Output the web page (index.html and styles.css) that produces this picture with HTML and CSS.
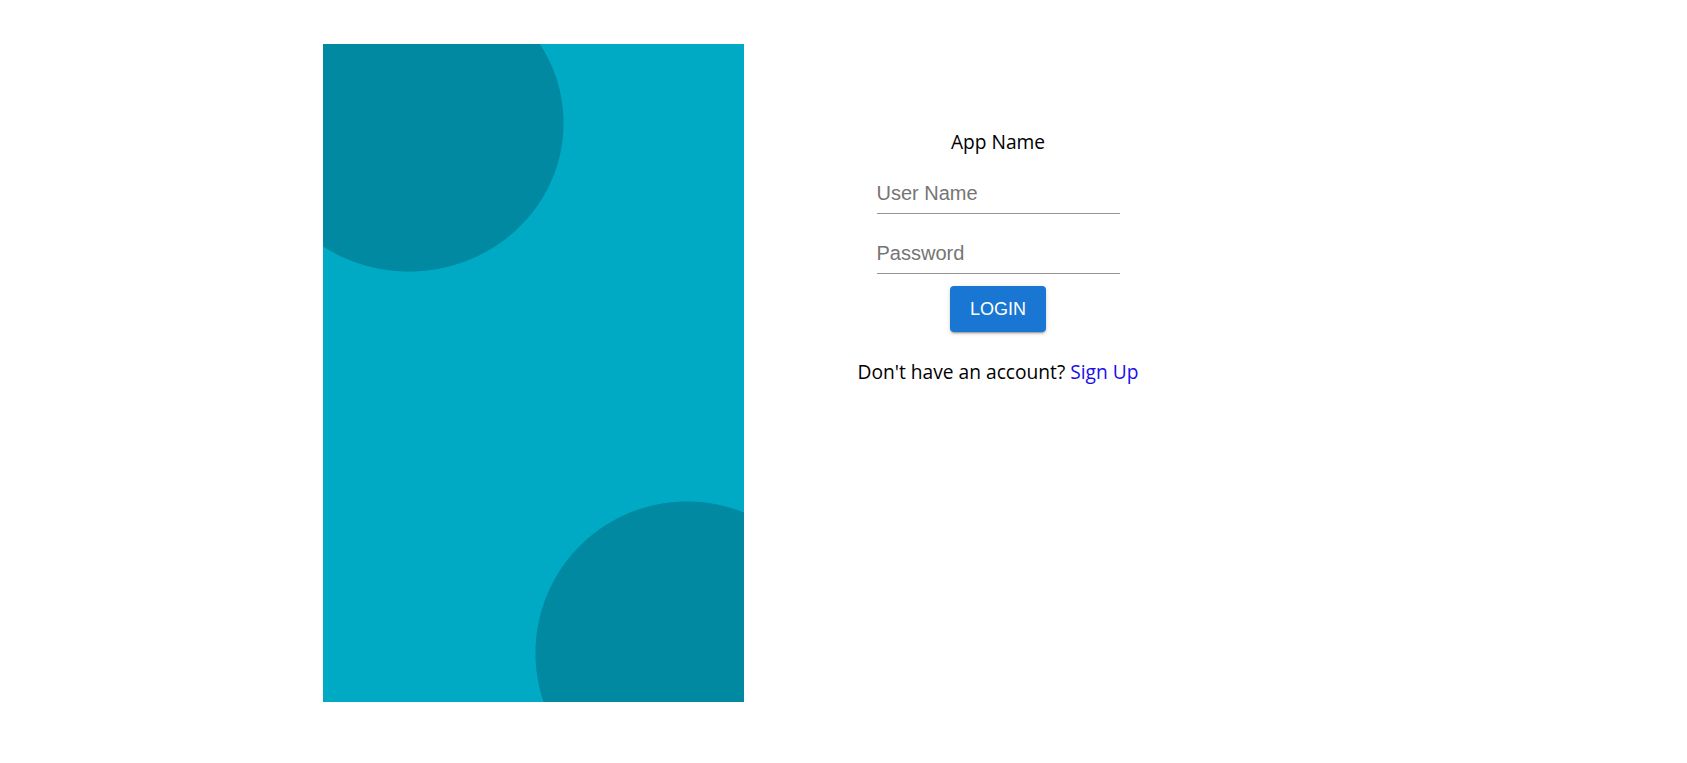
FILE: index.html
```html
<!DOCTYPE html>
<html lang="en">
<head>
<meta charset="utf-8">
<title>Login</title>
<link rel="stylesheet" href="styles.css">
</head>
<body>
<div class="page">
  <div class="hero"></div>
  <div class="form-col">
    <div class="app-name">App Name</div>
    <form class="form">
      <input class="field" type="text" placeholder="User Name">
      <input class="field" type="password" placeholder="Password">
      <button class="login-btn" type="button">LOGIN</button>
    </form>
    <p class="signup">Don't have an account? <a class="signup-link" href="#">Sign Up</a></p>
  </div>
</div>
</body>
</html>
```

FILE: styles.css
```css
html, body {
  margin: 0;
  padding: 0;
  background: #fff;
}

.page {
  display: flex;
  align-items: flex-start;
  padding-top: 44px;
  padding-left: 323px;
}

.hero {
  width: 421px;
  height: 658px;
  flex: none;
  background-color: #00aac4;
  background-image:
    radial-gradient(ellipse 155px 149px at 86px 79px, #0089a0 99.4%, rgba(0,137,160,0) 100%),
    radial-gradient(circle 152px at 364px 609px, #0089a0 99.4%, rgba(0,137,160,0) 100%);
}

.form-col {
  width: 508px;
  display: flex;
  flex-direction: column;
  align-items: center;
  padding-top: 86px;
}

.app-name {
  font-family: "Open Sans", sans-serif;
  font-size: 19.2px;
  line-height: 24px;
  color: #000;
}

.form {
  display: flex;
  flex-direction: column;
  align-items: center;
  margin: 0;
}

.field {
  display: block;
  box-sizing: content-box;
  width: 243px;
  height: 23px;
  margin: 28px 0 0;
  padding: 0 0 8px;
  border: none;
  border-bottom: 1px solid #949494;
  outline: none;
  background: transparent;
  font-family: "Liberation Sans", Arial, sans-serif;
  font-size: 20px;
  line-height: 23px;
  color: #222;
}

.field::placeholder {
  color: #757575;
  opacity: 1;
}

.login-btn {
  margin-top: 12px;
  width: 96px;
  height: 46px;
  border: none;
  border-radius: 4px;
  background: #1976d2;
  color: #fff;
  font-family: "Liberation Sans", Arial, sans-serif;
  font-size: 18px;
  padding: 0;
  box-shadow: 0 3px 1px -2px rgba(0,0,0,0.2), 0 2px 2px 0 rgba(0,0,0,0.14), 0 1px 5px 0 rgba(0,0,0,0.12);
  cursor: pointer;
}

.signup {
  margin: 26px 0 0;
  font-family: "Open Sans", sans-serif;
  font-size: 19.2px;
  line-height: 28px;
  color: #000;
  white-space: nowrap;
}

.signup-link {
  color: #1a0dee;
  text-decoration: none;
}
```
